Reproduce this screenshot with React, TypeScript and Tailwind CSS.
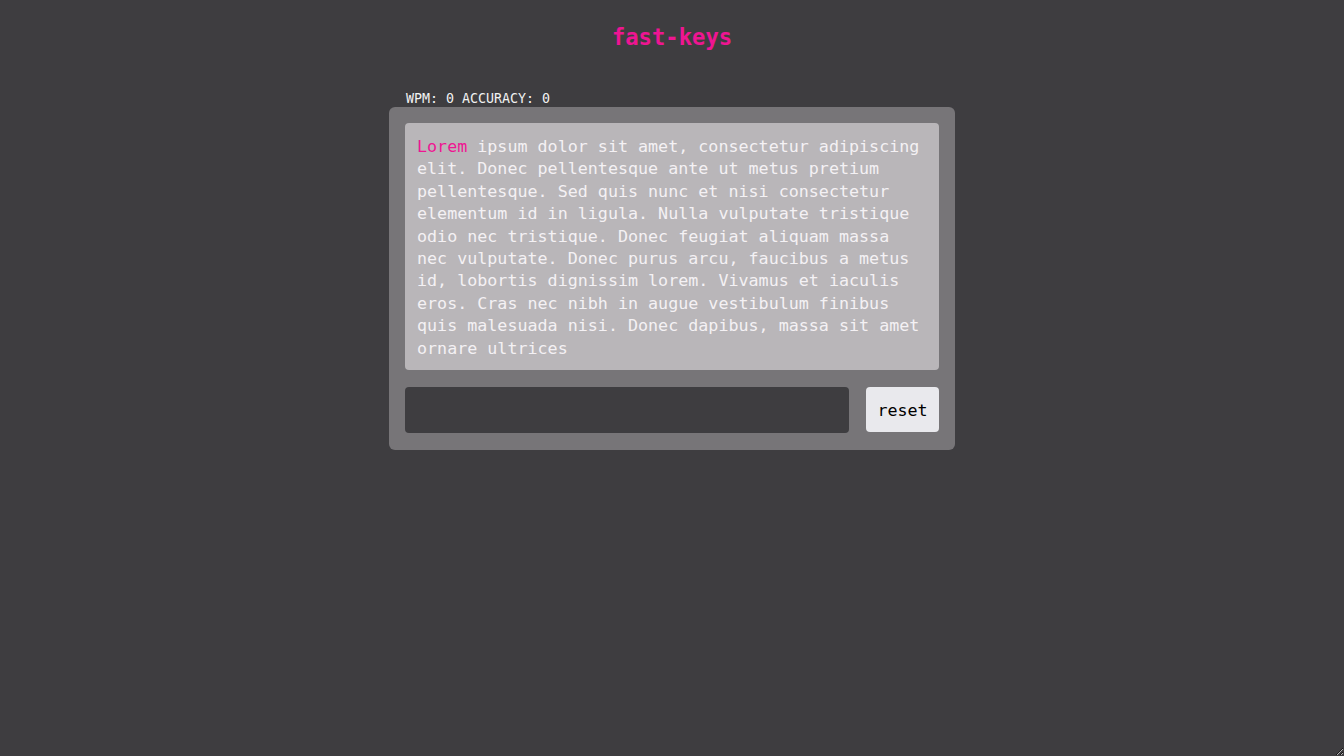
import React, { useState } from 'react'

const passage =
  'Lorem ipsum dolor sit amet, consectetur adipiscing elit. Donec pellentesque ante ut metus pretium pellentesque. Sed quis nunc et nisi consectetur elementum id in ligula. Nulla vulputate tristique odio nec tristique. Donec feugiat aliquam massa nec vulputate. Donec purus arcu, faucibus a metus id, lobortis dignissim lorem. Vivamus et iaculis eros. Cras nec nibh in augue vestibulum finibus quis malesuada nisi. Donec dapibus, massa sit amet ornare ultrices'

const App: React.FC = () => {
  const [typed, setTyped] = useState('')
  const words = passage.split(' ')
  const first = words[0]
  const rest = words.slice(1).join(' ')

  return (
    <div
      className="h-screen w-full overflow-auto resize bg-[#3e3d40] text-white"
      style={{ fontFamily: '"DejaVu Sans Mono", "Liberation Mono", monospace' }}
    >
      <h1 className="pt-[22px] text-center text-[22.2px] font-bold leading-[31px] text-[#ee1592]">
        fast-keys
      </h1>
      <div className="mx-auto mt-[36px] w-[566px]">
        <div className="h-[18px] pl-[17px] pt-px text-[13.3px] leading-[18px] text-[#f2f2f2]">
          WPM: 0 ACCURACY: 0
        </div>
        <div className="rounded-md bg-[#777578] px-4 pt-4 pb-[17px]">
          <p className="rounded bg-[#b9b6b9] px-3 pt-[12px] pb-[11px] text-[16.7px] leading-[22.4px] text-[#f4f1f4]">
            <span className="text-[#ee1592]">{first}</span> {rest}
          </p>
          <div className="mt-[17px] flex items-start gap-[17px]">
            <input
              value={typed}
              onChange={(e) => setTyped(e.target.value)}
              className="h-[46px] flex-1 rounded bg-[#3e3d40] px-3 text-white outline-none"
            />
            <button
              onClick={() => setTyped('')}
              className="h-[45px] w-[73px] rounded bg-[#e9e9ed] pt-px text-[16.7px] text-black"
            >
              reset
            </button>
          </div>
        </div>
      </div>
    </div>
  )
}

export default App
